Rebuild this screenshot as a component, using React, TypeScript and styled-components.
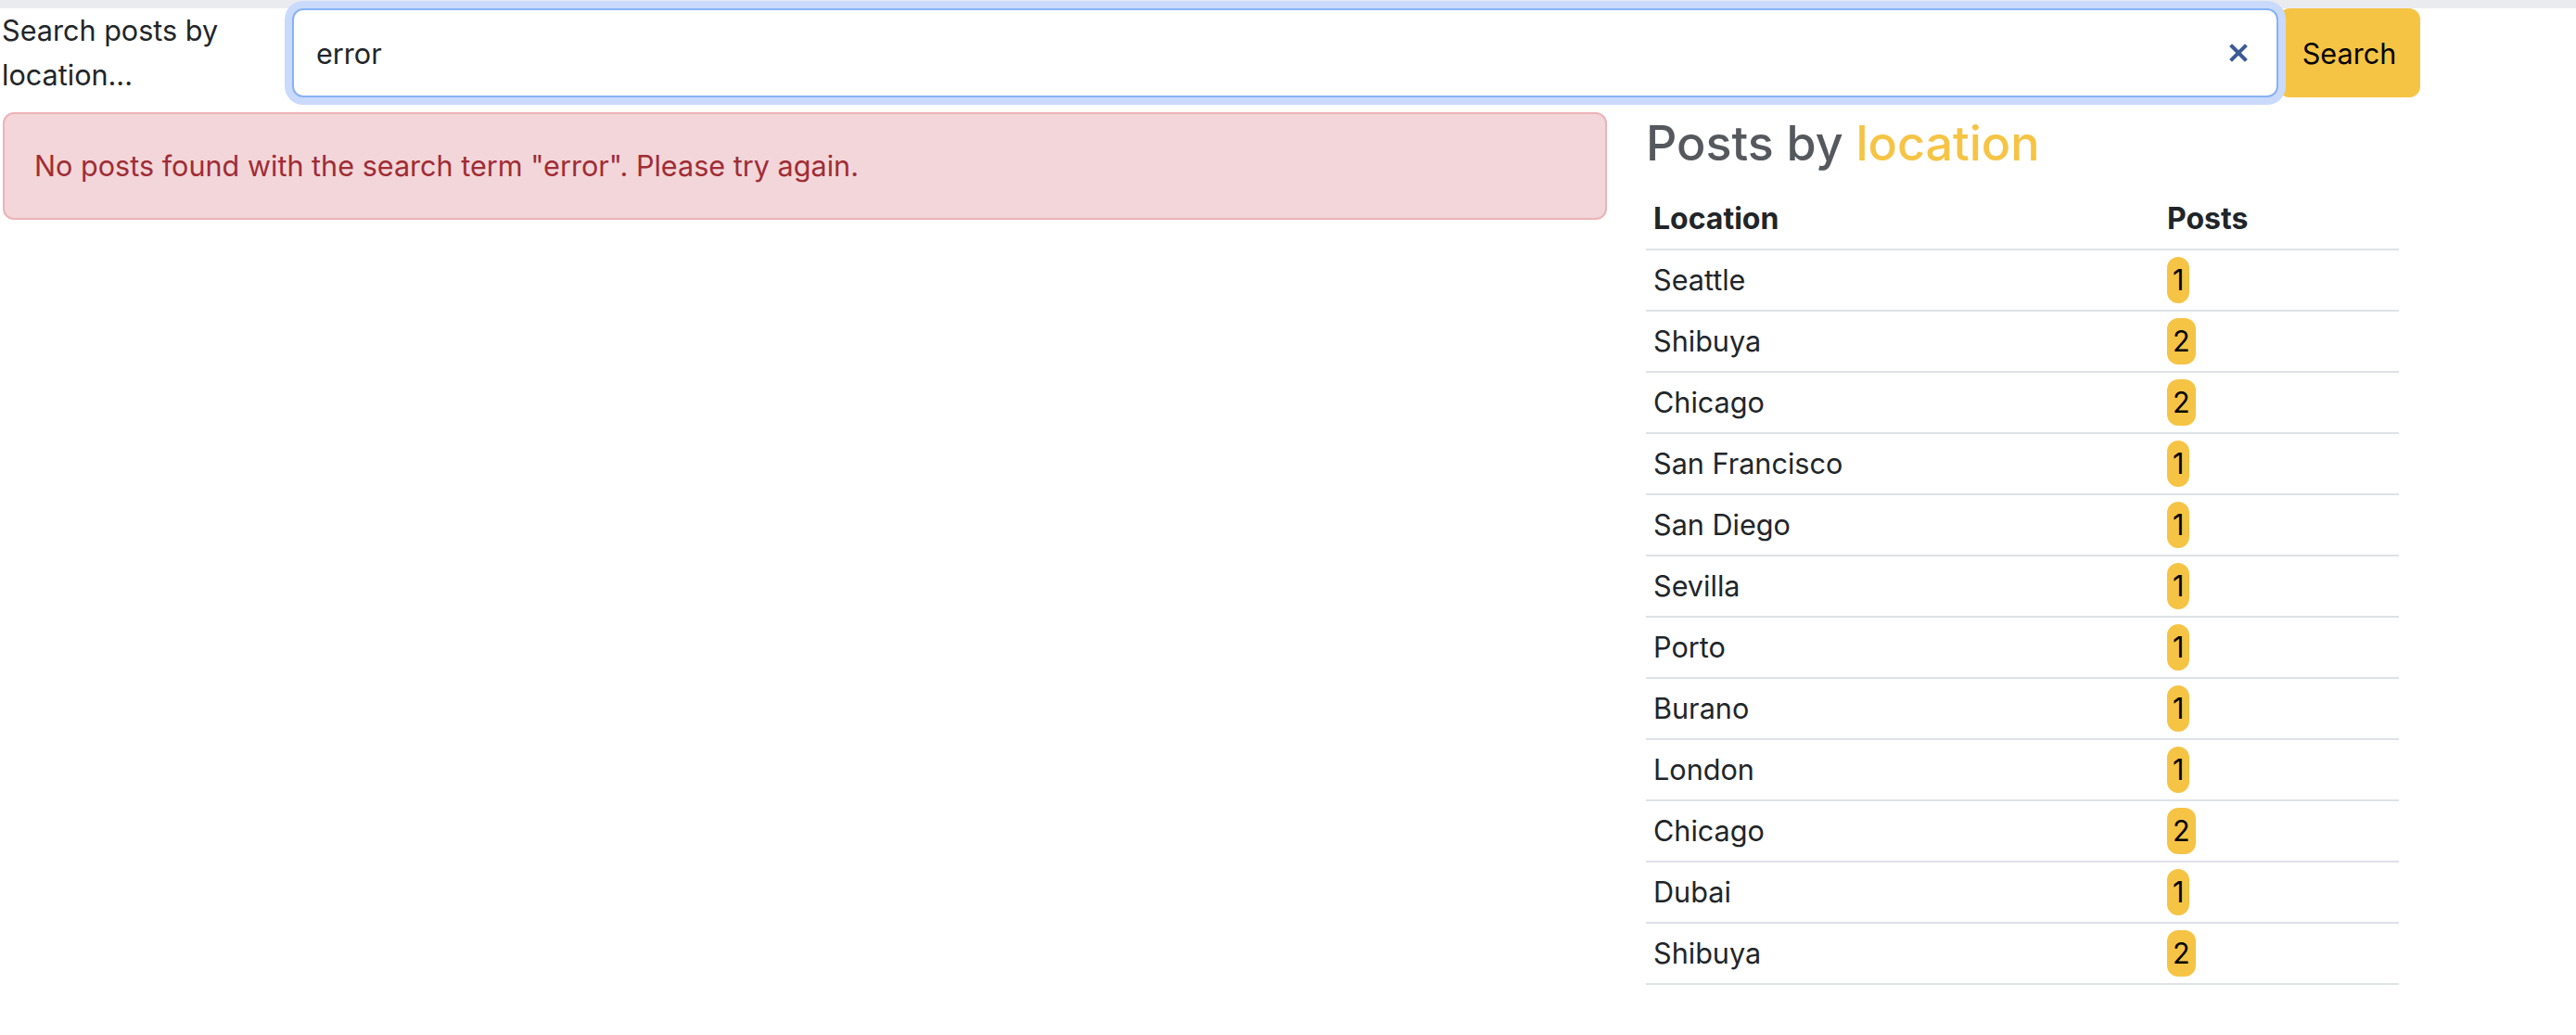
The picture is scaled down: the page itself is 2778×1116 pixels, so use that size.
import React from "react";
import styled, { createGlobalStyle } from "styled-components";

// Inter runs a little wider than the system font in the shot, so body text sits at 30.6px
const GlobalStyle = createGlobalStyle`
  body {
    margin: 0;
    background: #ffffff;
    color: #212529;
    font-family: Inter, "Liberation Sans", Arial, sans-serif;
  }
`;

type Row = { location: string; posts: number };

const rows: Row[] = [
  { location: "Seattle", posts: 1 },
  { location: "Shibuya", posts: 2 },
  { location: "Chicago", posts: 2 },
  { location: "San Francisco", posts: 1 },
  { location: "San Diego", posts: 1 },
  { location: "Sevilla", posts: 1 },
  { location: "Porto", posts: 1 },
  { location: "Burano", posts: 1 },
  { location: "London", posts: 1 },
  { location: "Chicago", posts: 2 },
  { location: "Dubai", posts: 1 },
  { location: "Shibuya", posts: 2 },
];

const TopBar = styled.div`
  height: 9px;
  background: #e9ebef;
`;

const SearchRow = styled.form`
  display: flex;
  align-items: stretch;
  height: 96px;
  margin: 0;
`;

const Label = styled.label`
  flex: 0 0 313px;
  padding-left: 2px;
  font-size: 30.6px;
  line-height: 48px;
  color: #212529;
`;

const InputWrap = styled.div`
  position: relative;
  flex: 0 0 2142px;
  display: flex;
`;

const Input = styled.input`
  flex: 1;
  box-sizing: border-box;
  height: 96px;
  padding: 0 80px 0 24px;
  border: 2px solid #88b2f6;
  border-radius: 12px;
  box-shadow: 0 0 0 8px #c9dafc;
  font-family: inherit;
  font-size: 30.6px;
  color: #212529;
  background: #ffffff;
  outline: none;
`;

const ClearButton = styled.button`
  position: absolute;
  right: 33px;
  top: 38px;
  width: 20px;
  height: 20px;
  padding: 0;
  border: none;
  background: transparent;
  display: flex;
  cursor: pointer;
`;

const SearchButton = styled.button`
  flex: 0 0 153px;
  height: 96px;
  border: none;
  border-radius: 12px;
  background: #f6c445;
  color: #000000;
  font-family: inherit;
  font-size: 30.6px;
  cursor: pointer;
`;

const Main = styled.div`
  display: flex;
  align-items: flex-start;
  margin-top: 16px;
`;

const Alert = styled.div`
  box-sizing: border-box;
  flex: 0 0 1730px;
  margin-left: 3px;
  padding: 32px;
  border: 2px solid #ecb3b8;
  border-radius: 12px;
  background: #f2d6d9;
  color: #a02c35;
  font-size: 30.6px;
  line-height: 48px;
`;

const Side = styled.section`
  flex: 0 0 812px;
  margin-left: 42px;
`;

const Heading = styled.h3`
  margin: 0 0 16px;
  height: 67px;
  font-size: 52px;
  font-weight: 500;
  line-height: 67px;
  color: #55595e;
`;

const Accent = styled.span`
  color: #f6c445;
`;

const Table = styled.table`
  width: 812px;
  border-collapse: collapse;
  font-size: 30.6px;
  line-height: 48px;
`;

const Cell = styled.td<{ $head?: boolean; $w?: number }>`
  height: 48px;
  box-sizing: content-box;
  padding: 8px;
  text-align: left;
  vertical-align: top;
  border-bottom: 2px solid #dee2e6;
  font-size: ${(p) => (p.$head ? "32px" : "30.6px")};
  font-weight: ${(p) => (p.$head ? 700 : 400)};
  color: #212529;
  width: ${(p) => (p.$w ? `${p.$w}px` : "auto")};
`;

const Badge = styled.span`
  display: inline-block;
  vertical-align: top;
  height: 50px;
  margin: -1px 0;
  padding: 0 6px;
  line-height: 50px;
  border-radius: 12px;
  background: #f6c445;
  color: #000000;
`;

function ClearIcon() {
  return (
    <svg width="20" height="20" viewBox="0 0 20 20">
      <path
        d="M3 3 L17 17 M17 3 L3 17"
        stroke="#3d5a98"
        strokeWidth="4"
        strokeLinecap="square"
        fill="none"
      />
    </svg>
  );
}

export default function App() {
  const term = "error";
  return (
    <>
      <GlobalStyle />
      <TopBar />
      <SearchRow onSubmit={(e) => e.preventDefault()}>
        <Label htmlFor="search">Search posts by location...</Label>
        <InputWrap>
          <Input id="search" type="text" defaultValue={term} />
          <ClearButton type="button" aria-label="Clear">
            <ClearIcon />
          </ClearButton>
        </InputWrap>
        <SearchButton type="submit">Search</SearchButton>
      </SearchRow>
      <Main>
        <Alert>
          No posts found with the search term "{term}". Please try again.
        </Alert>
        <Side>
          <Heading>
            Posts by <Accent>location</Accent>
          </Heading>
          <Table>
            <thead>
              <tr>
                <Cell as="th" $head $w={538}>
                  Location
                </Cell>
                <Cell as="th" $head>
                  Posts
                </Cell>
              </tr>
            </thead>
            <tbody>
              {rows.map((r, i) => (
                <tr key={i}>
                  <Cell>{r.location}</Cell>
                  <Cell>
                    <Badge>{r.posts}</Badge>
                  </Cell>
                </tr>
              ))}
            </tbody>
          </Table>
        </Side>
      </Main>
    </>
  );
}
